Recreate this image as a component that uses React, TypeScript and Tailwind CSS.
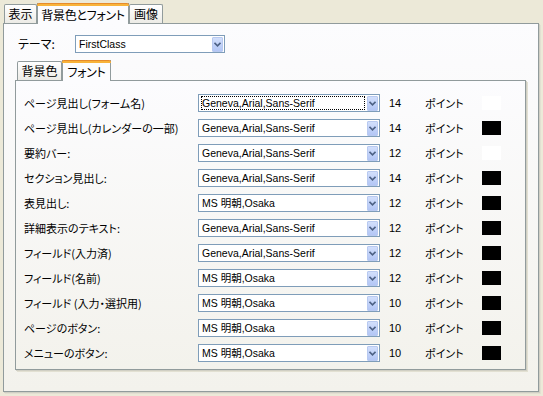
import React from "react";

const rows: { label: string; font: string; size: string; color: string; focus?: boolean }[] = [
  { label: "ページ見出し(フォーム名)", font: "Geneva,Arial,Sans-Serif", size: "14", color: "white", focus: true },
  { label: "ページ見出し(カレンダーの一部)", font: "Geneva,Arial,Sans-Serif", size: "14", color: "black" },
  { label: "要約バー:", font: "Geneva,Arial,Sans-Serif", size: "12", color: "white" },
  { label: "セクション見出し:", font: "Geneva,Arial,Sans-Serif", size: "14", color: "black" },
  { label: "表見出し:", font: "MS 明朝,Osaka", size: "12", color: "black" },
  { label: "詳細表示のテキスト:", font: "Geneva,Arial,Sans-Serif", size: "12", color: "black" },
  { label: "フィールド(入力済)", font: "Geneva,Arial,Sans-Serif", size: "12", color: "black" },
  { label: "フィールド(名前)", font: "MS 明朝,Osaka", size: "12", color: "black" },
  { label: "フィールド (入力・選択用)", font: "MS 明朝,Osaka", size: "10", color: "black" },
  { label: "ページのボタン:", font: "MS 明朝,Osaka", size: "10", color: "black" },
  { label: "メニューのボタン:", font: "MS 明朝,Osaka", size: "10", color: "black" },
];

function DropBtn() {
  return (
    <div className="w-[11px] h-[15px] my-[1px] mr-[1px] rounded-[1px] bg-gradient-to-b from-[#d2dffc] to-[#b3c6f5] border border-[#b8c9f0] flex items-center justify-center">
      <svg width="7" height="5" viewBox="0 0 7 5">
        <path d="M0.5 0.8 L3.5 3.8 L6.5 0.8" stroke="#4d6185" strokeWidth="1.6" fill="none" />
      </svg>
    </div>
  );
}

function Select({ text, focus, w }: { text: string; focus?: boolean; w: string }) {
  return (
    <div className={`${w} h-[18px] border border-[#7f9db9] bg-white flex items-stretch`}>
      <div className="flex-1 flex items-center pl-[2px] pr-[2px] py-[1px]">
        <div
          className={`h-full flex items-center pl-[1px] ${focus ? "outline outline-1 outline-dotted outline-black -outline-offset-1 w-full" : ""}`}
        >
          <span className="text-[10.5px] leading-none text-black [font-family:'Liberation_Sans',Tahoma,'Noto_Sans_CJK_JP',sans-serif]">
            {text}
          </span>
        </div>
      </div>
      <DropBtn />
    </div>
  );
}

function Tab({ label, active, w }: { label: string; active?: boolean; w: string }) {
  if (active) {
    return (
      <div className={`${w} h-[21px] relative -mb-px z-10 bg-[#fcfcfe] border-x border-[#919b9c] flex items-center justify-center`}>
        <div className="absolute top-0 -left-px -right-px h-[3px] rounded-t-[2px] bg-[#f8b33a] border-t border-[#e68b2c]" />
        <span className="pt-[2px] text-[12px] tracking-[-0.3px]">{label}</span>
      </div>
    );
  }
  return (
    <div className={`${w} h-[19px] mt-[2px] border border-b-0 border-[#919b9c] rounded-t-[2px] bg-gradient-to-b from-white to-[#ecebe6] flex items-center justify-center`}>
      <span className="text-[12px]">{label}</span>
    </div>
  );
}

export default function App() {
  return (
    <div className="w-[543px] h-[396px] bg-[#ece9d8] text-black [font-family:'Noto_Sans_CJK_JP','Liberation_Sans',sans-serif] [font-feature-settings:'palt'] overflow-hidden">
      <div className="pt-[2px] pl-[4px] flex items-end h-[23px]">
        <Tab label="表示" w="w-[33px]" />
        <Tab label="背景色とフォント" active w="w-[92px]" />
        <Tab label="画像" w="w-[34px]" />
      </div>
      <div className="ml-[3px] w-[536px] h-[369px] border border-[#919b9c] bg-gradient-to-b from-[#fcfcfe] to-[#f3f2ec] shadow-[1px_1px_0_#d0cfc4,2px_2px_0_#e2e0d2] relative">
        <div className="flex items-center mt-[11px]">
          <span className="ml-[14px] w-[57px] text-[12px] leading-none">テーマ:</span>
          <Select text="FirstClass" w="w-[150px]" />
        </div>
        <div className="ml-[13px] mt-[7px] flex items-end h-[20px]">
          <Tab label="背景色" w="w-[45px]" />
          <Tab label="フォント" active w="w-[49px]" />
        </div>
        <div className="ml-[11px] w-[511px] h-[290px] border border-[#919b9c] bg-gradient-to-b from-[#fcfcfe] to-[#f3f2ec] shadow-[1px_1px_0_#d0cfc4,2px_2px_0_#e2e0d2] pt-[13px] flex flex-col gap-[7px]">
          {rows.map((r, i) => (
            <div key={i} className="flex items-center h-[18px]">
              <span className="ml-[8px] w-[174px] text-[11px] leading-none whitespace-nowrap">{r.label}</span>
              <Select text={r.font} focus={r.focus} w="w-[182px]" />
              <span className="ml-[9px] w-[36px] text-[11px] leading-none [font-family:'Liberation_Sans',sans-serif]">{r.size}</span>
              <span className="w-[57px] text-[11px] leading-none">ポイント</span>
              <div className={`w-[19px] h-[14px] ${r.color === "white" ? "bg-white" : "bg-black"}`} />
            </div>
          ))}
        </div>
      </div>
    </div>
  );
}
